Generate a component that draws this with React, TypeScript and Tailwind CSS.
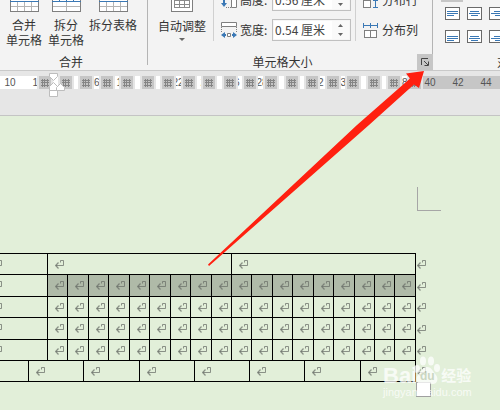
import React from 'react';

const INK = '#7f7f7f';
const BLUE = '#3a78b5';

const rulerNumbers = [10, 12, 14, 16, 18, 20, 22, 24, 26, 28, 30, 32, 34, 36, 38, 40, 42, 44, 46];

const TableIcon: React.FC<{ kind: 'merge' | 'split' | 'splitTable' }> = ({ kind }) => (
  <svg width="30" height="24" viewBox="0 0 30 24" shapeRendering="crispEdges" aria-hidden="true">
    <rect x="1" y="1" width="28" height="23" fill="#fff" />
    {kind !== 'split' && <path d="M8.5 13v10M15.5 13v10M22.5 13v10" stroke="#b4b4b4" />}
    {kind === 'split' && <path d="M15.5 13v10" stroke="#b4b4b4" />}
    <path d="M1 18.5h28" stroke="#b4b4b4" />
    <path d="M1.5 1v22.5h28V1" fill="none" stroke={INK} />
    <path d="M1 13.5h29" stroke={BLUE} />
    {kind === 'split' && <path d="M8.5 1v12M15.5 1v12M22.5 1v12" stroke={BLUE} />}
  </svg>
);

const AutoFitIcon = () => (
  <svg width="22" height="24" viewBox="0 0 22 24" shapeRendering="crispEdges" aria-hidden="true">
    <rect x=".5" y=".5" width="21" height="23" fill="#fff" stroke={INK} />
    <path d="M3.5 4.5h15v15h-15zM8.5 5v14M13.5 5v14M4 8.500h14M4 12.500h14M4 16.500h14" fill="none" stroke="#8a8a8a" />
  </svg>
);

const HeightIcon = () => (
  <svg width="16" height="16" viewBox="0 0 16 16" aria-hidden="true">
    <path d="M10.5 .5h5v15h-5z" fill="#fff" stroke={INK} />
    <path d="M5 15.5h5M5 .5h5" stroke={INK} strokeDasharray="1 1" />
    <path d="M2 3h2v8h2l-3 4-3-4h2z" fill={BLUE} />
  </svg>
);

const WidthIcon = () => (
  <svg width="16" height="16" viewBox="0 0 16 16" aria-hidden="true">
    <path d="M.5 .5h15v4H.5z" fill="#fff" stroke={INK} />
    <path d="M.5 5v5M15.5 5v5" stroke={INK} strokeDasharray="1 1" />
    <path d="M6.5 11.5h3v3h-3z" fill="#fff" stroke={INK} />
    <path d="M0 13l4-3v2h1v2H4v2zM16 13l-4-3v2h-1v2h1v2z" fill={BLUE} />
  </svg>
);

const RowsIcon = () => (
  <svg width="15" height="15" viewBox="0 0 15 15" shapeRendering="crispEdges" aria-hidden="true">
    <path d="M.5 .5h7v14h-7zM.5 7.5h7" fill="#fff" stroke={INK} />
    <path d="M12.5 0v15M10 .5h5M10 7.5h5M10 14.5h5" stroke={BLUE} />
  </svg>
);

const ColumnsIcon = () => (
  <svg width="15" height="15" viewBox="0 0 15 15" shapeRendering="crispEdges" aria-hidden="true">
    <path d="M1.5 7.5h12v7h-12zM7.5 7.5v7" fill="#fff" stroke={INK} />
    <path d="M0 2.5h15M.5 0v5M7.5 0v5M14.5 0v5" stroke={BLUE} />
  </svg>
);

const AlignIcon: React.FC<{ lines: string }> = ({ lines }) => (
  <svg width="15" height="13" viewBox="0 0 15 13" shapeRendering="crispEdges" aria-hidden="true">
    <rect x=".5" y=".5" width="14" height="12" fill="#fff" stroke="#6a6a6a" />
    <path d={lines} stroke={BLUE} />
  </svg>
);

// Top, middle and bottom row of the cell alignment picker
const alignments = [
  { name: '靠上两端对齐', lines: 'M2 2.5h11M2 4.5h8M2 6.5h11', active: true },
  { name: '靠上居中对齐', lines: 'M2 2.5h11M4 4.5h7M2 6.5h11' },
  { name: '靠上右对齐', lines: 'M2 2.5h11M5 4.5h8M2 6.5h11' },
  { name: '中部两端对齐', lines: 'M2 4.5h11M2 6.5h11M2 8.5h7' },
  { name: '水平居中', lines: 'M3 4.5h9M2 6.5h11M4 8.5h7' },
  { name: '中部右对齐', lines: 'M5 4.5h8M2 6.5h11M6 8.5h7' },
  { name: '靠下两端对齐', lines: 'M2 6.5h11M2 8.5h11M2 10.5h7' },
  { name: '靠下居中对齐', lines: 'M3 6.5h9M2 8.5h11M4 10.5h7' },
  { name: '靠下右对齐', lines: 'M5 6.5h8M2 8.5h11M6 10.5h7' },
];

const BigButton: React.FC<{ icon: React.ReactNode; lines: string[]; wide?: boolean }> = ({ icon, lines, wide }) => (
  <button type="button" className={`flex flex-col items-center gap-[5px] ${wide ? 'w-[52px]' : 'w-[42px]'}`}>
    {icon}
    <span className="flex h-[30px] flex-col items-center whitespace-nowrap leading-[15px]">
      {lines.map((line) => (
        <span key={line}>{line}</span>
      ))}
    </span>
  </button>
);

const SizeField: React.FC<{ id: string; label: string; value: string; icon: React.ReactNode }> = ({ id, label, value, icon }) => (
  <div className="flex h-[22px] items-center">
    {icon}
    <label htmlFor={id} className="ml-[3px] w-8 whitespace-nowrap">{label}</label>
    <div className="flex h-[22px] w-[79px] border border-[#c0c0c0] bg-[#f6f6f6] p-px">
      <input id={id} defaultValue={value} className="w-[58px] bg-white px-px text-[#444] outline-none" />
      <div className="flex flex-1 flex-col items-center justify-around bg-[#fafafa]">
        <button type="button" aria-label={`${label} +`}>
          <svg width="5" height="3" viewBox="0 0 5 3" className="block"><path d="M0 3L2.5 0 5 3z" fill="#666" /></svg>
        </button>
        <button type="button" aria-label={`${label} -`}>
          <svg width="5" height="3" viewBox="0 0 5 3" className="block"><path d="M0 0L2.5 3 5 0z" fill="#666" /></svg>
        </button>
      </div>
    </div>
  </div>
);

const Ribbon = () => (
  <div className="flex h-[71px] overflow-hidden border-b border-[#c9c9c9] bg-[#f3f3f3]">
    {/* Merge */}
    <section className="shrink-0 pl-[3px] pr-2">
      <div className="flex h-[54px] items-end overflow-hidden pb-[7px]">
        <BigButton icon={<TableIcon kind="merge" />} lines={['合并', '单元格']} />
        <BigButton icon={<TableIcon kind="split" />} lines={['拆分', '单元格']} />
        <BigButton icon={<TableIcon kind="splitTable" />} lines={['拆分表格']} wide />
      </div>
      <h2 className="text-center leading-4">合并</h2>
    </section>
    <div className="h-[65px] w-px shrink-0 bg-[#b4b4b4]" />

    {/* Cell size */}
    <section className="shrink-0">
      <div className="flex h-[54px] items-end overflow-hidden border-r border-[#b4b4b4] pl-2">
        <button type="button" className="flex w-[52px] flex-col items-center gap-[5px] pb-[7px]">
          <AutoFitIcon />
          <span className="flex h-[30px] flex-col items-center gap-1 whitespace-nowrap leading-[17px]">
            自动调整
            <svg width="6" height="3" viewBox="0 0 6 3"><path d="M0 0h6L3 3z" fill="#666" /></svg>
          </span>
        </button>
        <div className="ml-[5px] h-[41px] w-px self-start bg-[#d0d0d0]" />
        <div className="ml-[7px] flex flex-col gap-2 pb-[13px]">
          <SizeField id="row-height" label="高度:" value="0.56 厘米" icon={<HeightIcon />} />
          <SizeField id="col-width" label="宽度:" value="0.54 厘米" icon={<WidthIcon />} />
        </div>
        <div className="ml-1 h-[41px] w-px self-start bg-[#d0d0d0]" />
        <div className="ml-[7px] flex flex-col gap-2 pb-[13px] pr-[14px]">
          <button type="button" className="flex h-[22px] items-center gap-1 whitespace-nowrap"><RowsIcon />分布行</button>
          <button type="button" className="flex h-[22px] items-center gap-1 whitespace-nowrap"><ColumnsIcon />分布列</button>
        </div>
      </div>
      <div className="flex">
        <h2 className="flex-1 text-center leading-4">单元格大小</h2>
        <button type="button" aria-label="表格属性" className="flex h-4 w-4 items-center justify-center bg-[#c6c6c6]">
          <svg width="8" height="8" viewBox="0 0 8 8" aria-hidden="true">
            <path d="M.5 7V.5H7M3 3l4 4M7.5 3.5v4h-4" fill="none" stroke="#444" />
          </svg>
        </button>
      </div>
    </section>

    {/* Alignment */}
    <section className="w-44 shrink-0">
      <div className="flex h-[54px] items-end overflow-hidden pb-[6px] pl-2">
        <div className="grid grid-cols-3">
          {alignments.map((item) => (
            <button
              key={item.name}
              type="button"
              aria-label={item.name}
              className={`flex h-[23px] w-[22px] items-center justify-center ${item.active ? 'bg-[#c6c6c6]' : ''}`}
            >
              <AlignIcon lines={item.lines} />
            </button>
          ))}
        </div>
      </div>
      <h2 className="text-center leading-4">对齐方式</h2>
    </section>
  </div>
);

const ColumnMarker = () => (
  <div className="flex h-[13px] w-4 items-center justify-center border-x-2 border-[#e5e5e5] bg-[#c6c6c6]">
    <svg width="8" height="8" viewBox="0 0 8 8" shapeRendering="crispEdges">
      <path d="M1.5 0v8M3.5 0v8M6.5 0v8M0 1.5h8M0 3.5h8M0 6.5h8" stroke="#858585" />
    </svg>
  </div>
);

const Ruler = () => (
  <div className="h-[45px] overflow-hidden border-b border-[#c4c4c4] bg-[#e6e6e6] pt-[5px]">
    <div className="relative flex h-[13px] bg-[#c6c6c6]">
      <div className="w-[417px] shrink-0 bg-white" />
      <div className="absolute inset-y-0 -left-1 flex font-['Liberation_Sans'] text-[10px] leading-[13px] text-[#555]">
        {rulerNumbers.map((n) => (
          <span key={n} className="w-7 shrink-0 text-center">{n}</span>
        ))}
      </div>
      <div className="absolute inset-y-0 left-[37px] flex w-[386px] justify-between">
        {Array.from({ length: 19 }, (_, i) => (
          <ColumnMarker key={i} />
        ))}
      </div>
      {/* Indent handles */}
      <svg width="17" height="26" viewBox="0 0 17 26" className="absolute -top-1 left-[49px]" aria-hidden="true">
        <g fill="#fff" stroke="#bdbdbd">
          <path d="M.5 1.5h8v3l-4 4-4-4z" />
          <path d="M.5 18.5v-4l4-4 4 4v4z" />
          <path d="M7.5 18.5v-3l4-4 4 4v3z" />
          <path d="M.5 18.5h8v6h-8z" />
        </g>
      </svg>
    </div>
  </div>
);

const Mark = () => (
  <svg width="9" height="9" viewBox="0 0 9 9" className="block" aria-hidden="true">
    <g fill="none" stroke="#6b7069" strokeOpacity=".75">
      <path d="M5.5 2.5v-2h3v5H1" />
      <path d="M3.5 2.5L.7 5.5l2.800 3" strokeWidth="1.2" />
    </g>
  </svg>
);

const Cell: React.FC<{ span?: number; top?: boolean; shaded?: boolean }> = ({ span, top, shaded }) => (
  <td colSpan={span} className={`border-b border-r border-black p-0 pl-[7px] ${top ? 'border-t' : ''} ${shaded ? 'bg-[#afbaa8]' : ''}`}>
    <Mark />
  </td>
);

const EndMark = () => (
  <td className="p-0 pl-px">
    <Mark />
  </td>
);

const bodyRows = [
  { height: 'h-[22px]', shaded: true },
  { height: 'h-[21px]', shaded: false },
  { height: 'h-[22px]', shaded: false },
  { height: 'h-[21px]', shaded: false },
];

const DocumentTable = () => (
  <div className="-ml-[14px]">
    <table className="w-[446px] table-fixed border-separate border-spacing-0">
      <colgroup>
        <col className="w-[62px]" />
        {Array.from({ length: 18 }, (_, i) => (
          <col key={i} />
        ))}
        <col className="w-4" />
      </colgroup>
      <tbody>
        <tr className="h-[22px]">
          <Cell top />
          <Cell span={9} top />
          <Cell span={9} top />
          <EndMark />
        </tr>
        {bodyRows.map((row, r) => (
          <tr key={r} className={row.height}>
            <Cell />
            {Array.from({ length: 18 }, (_, i) => (
              <Cell key={i} shaded={row.shaded} />
            ))}
            <EndMark />
          </tr>
        ))}
      </tbody>
    </table>
    <table className="w-[446px] table-fixed border-separate border-spacing-0">
      <colgroup>
        <col className="w-[43px]" />
        {Array.from({ length: 7 }, (_, i) => (
          <col key={i} />
        ))}
        <col className="w-4" />
      </colgroup>
      <tbody>
        <tr className="h-[21px]">
          <td className="border-b border-r border-black p-0" />
          {Array.from({ length: 7 }, (_, i) => (
            <Cell key={i} />
          ))}
          <EndMark />
        </tr>
      </tbody>
    </table>
  </div>
);

const Watermark = () => (
  <div className="absolute left-[383px] top-[356px] font-['Liberation_Sans','Noto_Sans_CJK_SC',sans-serif] text-white opacity-75">
    <div className="flex h-[30px] items-end font-bold">
      <span className="text-[22px] leading-5">Bai</span>
      <div className="relative -ml-1">
        <svg width="28" height="30" viewBox="0 0 28 30" className="block" aria-hidden="true">
          <g fill="#fff">
            <ellipse cx="4" cy="13" rx="3" ry="4" />
            <ellipse cx="10" cy="5" rx="3" ry="4.5" />
            <ellipse cx="18" cy="5" rx="3" ry="4.5" />
            <ellipse cx="24" cy="12" rx="3" ry="4" />
            <path d="M14 11c5 0 6 5 9 8 3 4 1 9-3 9-3 0-4-1-6-1s-3 1-6 1c-4 0-6-5-3-9 3-3 4-8 9-8z" />
          </g>
        </svg>
        <span className="absolute inset-x-0 bottom-1 text-center text-[12px] leading-3 text-[#c3cfba]">du</span>
      </div>
      <span className="text-[15px] leading-5">经验</span>
    </div>
    <div className="text-[11px] leading-3">jingyan.baidu.com</div>
  </div>
);

const Arrow = () => (
  <svg width="218" height="196" viewBox="0 0 218 196" className="pointer-events-none absolute left-[207px] top-[70px]" aria-hidden="true">
    <path d="M1 194.500L150 55 203 8.500 199 3.500 217 1 212 18 207 14.500 162 55 2 196z" fill="#ff2010" />
  </svg>
);

const App: React.FC = () => {
  return (
    <main className="relative flex min-h-screen flex-col overflow-hidden bg-[#e2efd9] font-['Noto_Sans_CJK_SC','Open_Sans',sans-serif] text-xs text-[#333]">
      <Ribbon />
      <Ruler />
      <div className="flex-1 pt-[71px]">
        {/* Page margin corner */}
        <div className="ml-[417px] h-6 w-6 border-b border-l border-[#a6a6a6]" />
        <div className="pt-[42px]">
          <DocumentTable />
        </div>
        <div className="ml-[416px] h-[15px] w-[15px] border border-[#a0a0a0] bg-white" />
      </div>
      <Watermark />
      <Arrow />
    </main>
  );
};

export default App;
